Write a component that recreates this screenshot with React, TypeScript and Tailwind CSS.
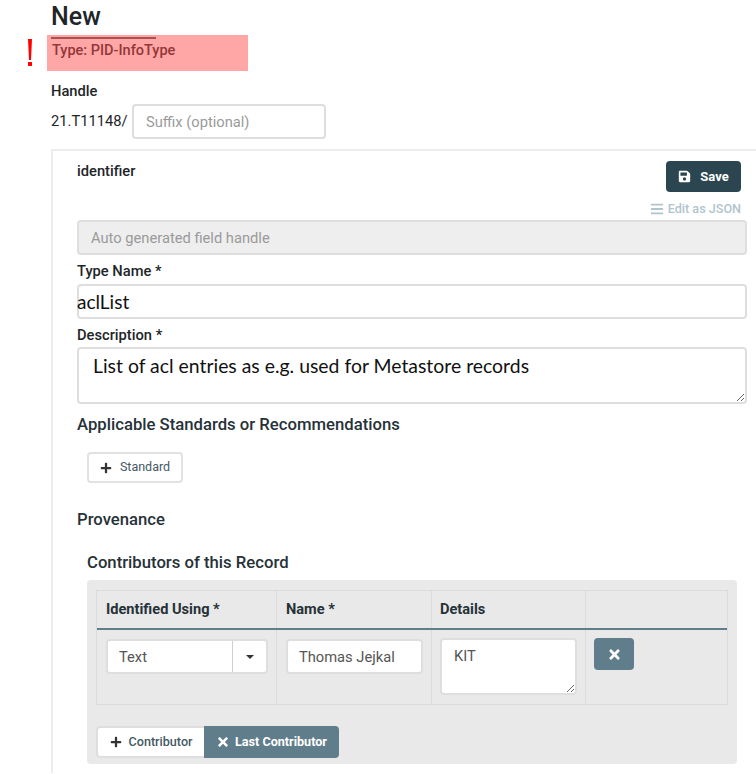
import { FaBars, FaPlus, FaSave, FaTimes } from 'react-icons/fa';

const inputClass =
  'block h-[35px] w-full rounded-[4px] border-2 border-[#dedede] bg-white px-[12px] text-[14.7px] text-[#555] outline-none';
const labelClass = 'block h-[14px] text-[14.7px] leading-[14px] font-medium text-[#212529]';
const headingClass = 'text-[16.7px] leading-[20px] font-medium text-[#263238]';
const userFont = { fontFamily: 'Lato, sans-serif' };

function Warning() {
  return (
    <>
      <div className="absolute top-[39px] left-[28px] flex h-[27px] w-[4px] flex-col items-center">
        <div className="h-[21px] w-[4px] bg-[#ff0000] [clip-path:polygon(0_0,100%_0,75%_100%,25%_100%)]" />
        <div className="mt-[2px] h-[4px] w-[4px] bg-[#ff0000]" />
      </div>
      <div className="absolute top-[35px] left-[47px] h-[36px] w-[201px] bg-[#ff4d4d]/50" />
    </>
  );
}

function ContributorTable() {
  return (
    <div className="rounded-[4px] bg-[#e9e9e9] pt-[10px] pr-[9px] pb-[6px] pl-[9px]">
      <div className="border border-[#dcdcdc]">
        <div className="grid h-[39px] grid-cols-[179px_155px_154px_1fr] border-b-2 border-[#607d8b] text-[14.6px] font-bold text-[#263238]">
          <div className="flex items-center pl-[9px]">Identified Using *</div>
          <div className="flex items-center border-l border-[#dcdcdc] pl-[9px]">Name *</div>
          <div className="flex items-center border-l border-[#dcdcdc] pl-[8px]">Details</div>
          <div className="border-l border-[#dcdcdc]" />
        </div>
        <div className="grid h-[74px] grid-cols-[179px_155px_154px_1fr]">
          <div className="pt-[9px] pl-[9px]">
            <div className="flex h-[35px] w-[162px] rounded-[4px] border-2 border-[#dedede] bg-white text-[14.7px] text-[#555]">
              <div className="flex w-[125px] items-center border-r border-[#cfcfcf] pt-[1px] pl-[11px]">Text</div>
              <div className="flex flex-1 items-center justify-center">
                <div className="h-0 w-0 border-x-[4px] border-t-[4px] border-x-transparent border-t-[#333]" />
              </div>
            </div>
          </div>
          <div className="border-l border-[#dcdcdc] pt-[9px] pl-[9px]">
            <input readOnly value="Thomas Jejkal" className={`${inputClass} !w-[137px] !px-[11px] pt-[1px]`} />
          </div>
          <div className="border-l border-[#dcdcdc] pt-[8px] pl-[8px]">
            <textarea
              readOnly
              value="KIT"
              className="block h-[57px] w-[137px] rounded-[4px] border-2 border-[#dedede] bg-white px-[12px] py-[7px] text-[14.7px] leading-[18px] text-[#555] outline-none"
            />
          </div>
          <div className="border-l border-[#dcdcdc] pt-[8px] pl-[8px]">
            <button className="flex h-[32px] w-[40px] items-center justify-center rounded-[4px] bg-[#607d8b] text-white">
              <FaTimes size={15} />
            </button>
          </div>
        </div>
      </div>
      <div className="mt-[21px] flex h-[32px] w-[243px] overflow-hidden rounded-[4px] text-[12.6px]">
        <button className="flex w-[108px] items-center justify-center gap-[7px] rounded-l-[4px] border-2 border-r-0 border-[#dedede] bg-white font-medium text-[#455a64]">
          <FaPlus size={12} className="text-[#333]" />
          Contributor
        </button>
        <button className="flex flex-1 items-center justify-center gap-[5px] bg-[#607d8b] font-bold text-white">
          <FaTimes size={14} />
          Last Contributor
        </button>
      </div>
    </div>
  );
}

export default function App() {
  return (
    <div
      className="relative h-[774px] w-[756px] overflow-hidden bg-white pl-[51px] text-[#212529]"
      style={{ fontFamily: 'Roboto, sans-serif' }}
    >
      <Warning />
      <h1 className="pt-[3px] text-[25px] leading-[28px] font-medium text-[#212529]">New</h1>
      <div className="mt-[6px] h-[2px] w-[105px] bg-[#555]" />
      <div className="mt-[5px] h-[14px] pl-[1px] text-[14.5px] leading-[14px] font-medium text-[#222]">Type: PID-InfoType</div>

      <div className="mt-[26px] text-[14.7px] leading-[14px] font-medium">Handle</div>
      <div className="mt-[6px] flex items-center gap-[4px]">
        <span className="w-[77px] text-[14.7px] text-[#212529]">21.T11148/</span>
        <input placeholder="Suffix (optional)" className={`${inputClass} !w-[194px] placeholder:text-[#9a9a9a]`} />
      </div>

      <div className="mt-[10px] h-[624px] border-t-2 border-l-2 border-[#ececec] pt-[10px] pr-[9px] pl-[24px]">
        <div className="flex items-start justify-between">
          <div className="mt-[3px] text-[14.7px] leading-[14px] font-medium">identifier</div>
          <div className="mr-[6px] flex flex-col items-end">
            <button className="flex h-[31px] w-[75px] items-center justify-center gap-[9px] rounded-[4px] bg-[#2b4650] text-[13px] font-bold text-white">
              <FaSave size={13} />
              Save
            </button>
            <div className="mt-[10px] flex h-[14px] items-center gap-[4px] text-[12.6px] font-medium text-[#b0c4ce]">
              <FaBars size={14} />
              Edit as JSON
            </div>
          </div>
        </div>

        <input
          disabled
          placeholder="Auto generated field handle"
          className={`${inputClass} mt-[4px] !bg-[#eeeeee] placeholder:text-[#9a9a9a]`}
        />

        <label className={`${labelClass} mt-[9px]`}>Type Name *</label>
        <input
          readOnly
          value="aclList"
          style={userFont}
          className={`${inputClass} mt-[6px] !border-l-0 !px-0 pb-[1px] !text-[19px] !text-[#111] shadow-[inset_2px_0_0_#dedede]`}
        />

        <label className={`${labelClass} mt-[9px]`}>Description *</label>
        <textarea
          readOnly
          value="List of acl entries as e.g. used for Metastore records"
          style={userFont}
          className="mt-[5px] block h-[57px] w-full rounded-[4px] border-2 border-[#dedede] bg-white px-[14px] py-[5px] text-[19.4px] leading-[24px] text-[#111] outline-none"
        />

        <h2 className={`${headingClass} mt-[11px]`}>Applicable Standards or Recommendations</h2>
        <button className="mt-[17px] ml-[10px] flex h-[31px] w-[96px] items-center justify-center gap-[8px] rounded-[4px] border-2 border-[#e2e2e2] bg-white text-[12.5px] text-[#455a64]">
          <FaPlus size={12} className="text-[#333]" />
          Standard
        </button>

        <h2 className={`${headingClass} mt-[27px]`}>Provenance</h2>
        <div className="mr-[10px] ml-[10px]">
          <h3 className={`${headingClass} mt-[23px]`}>Contributors of this Record</h3>
          <div className="mt-[7px]">
            <ContributorTable />
          </div>
        </div>
      </div>
    </div>
  );
}
